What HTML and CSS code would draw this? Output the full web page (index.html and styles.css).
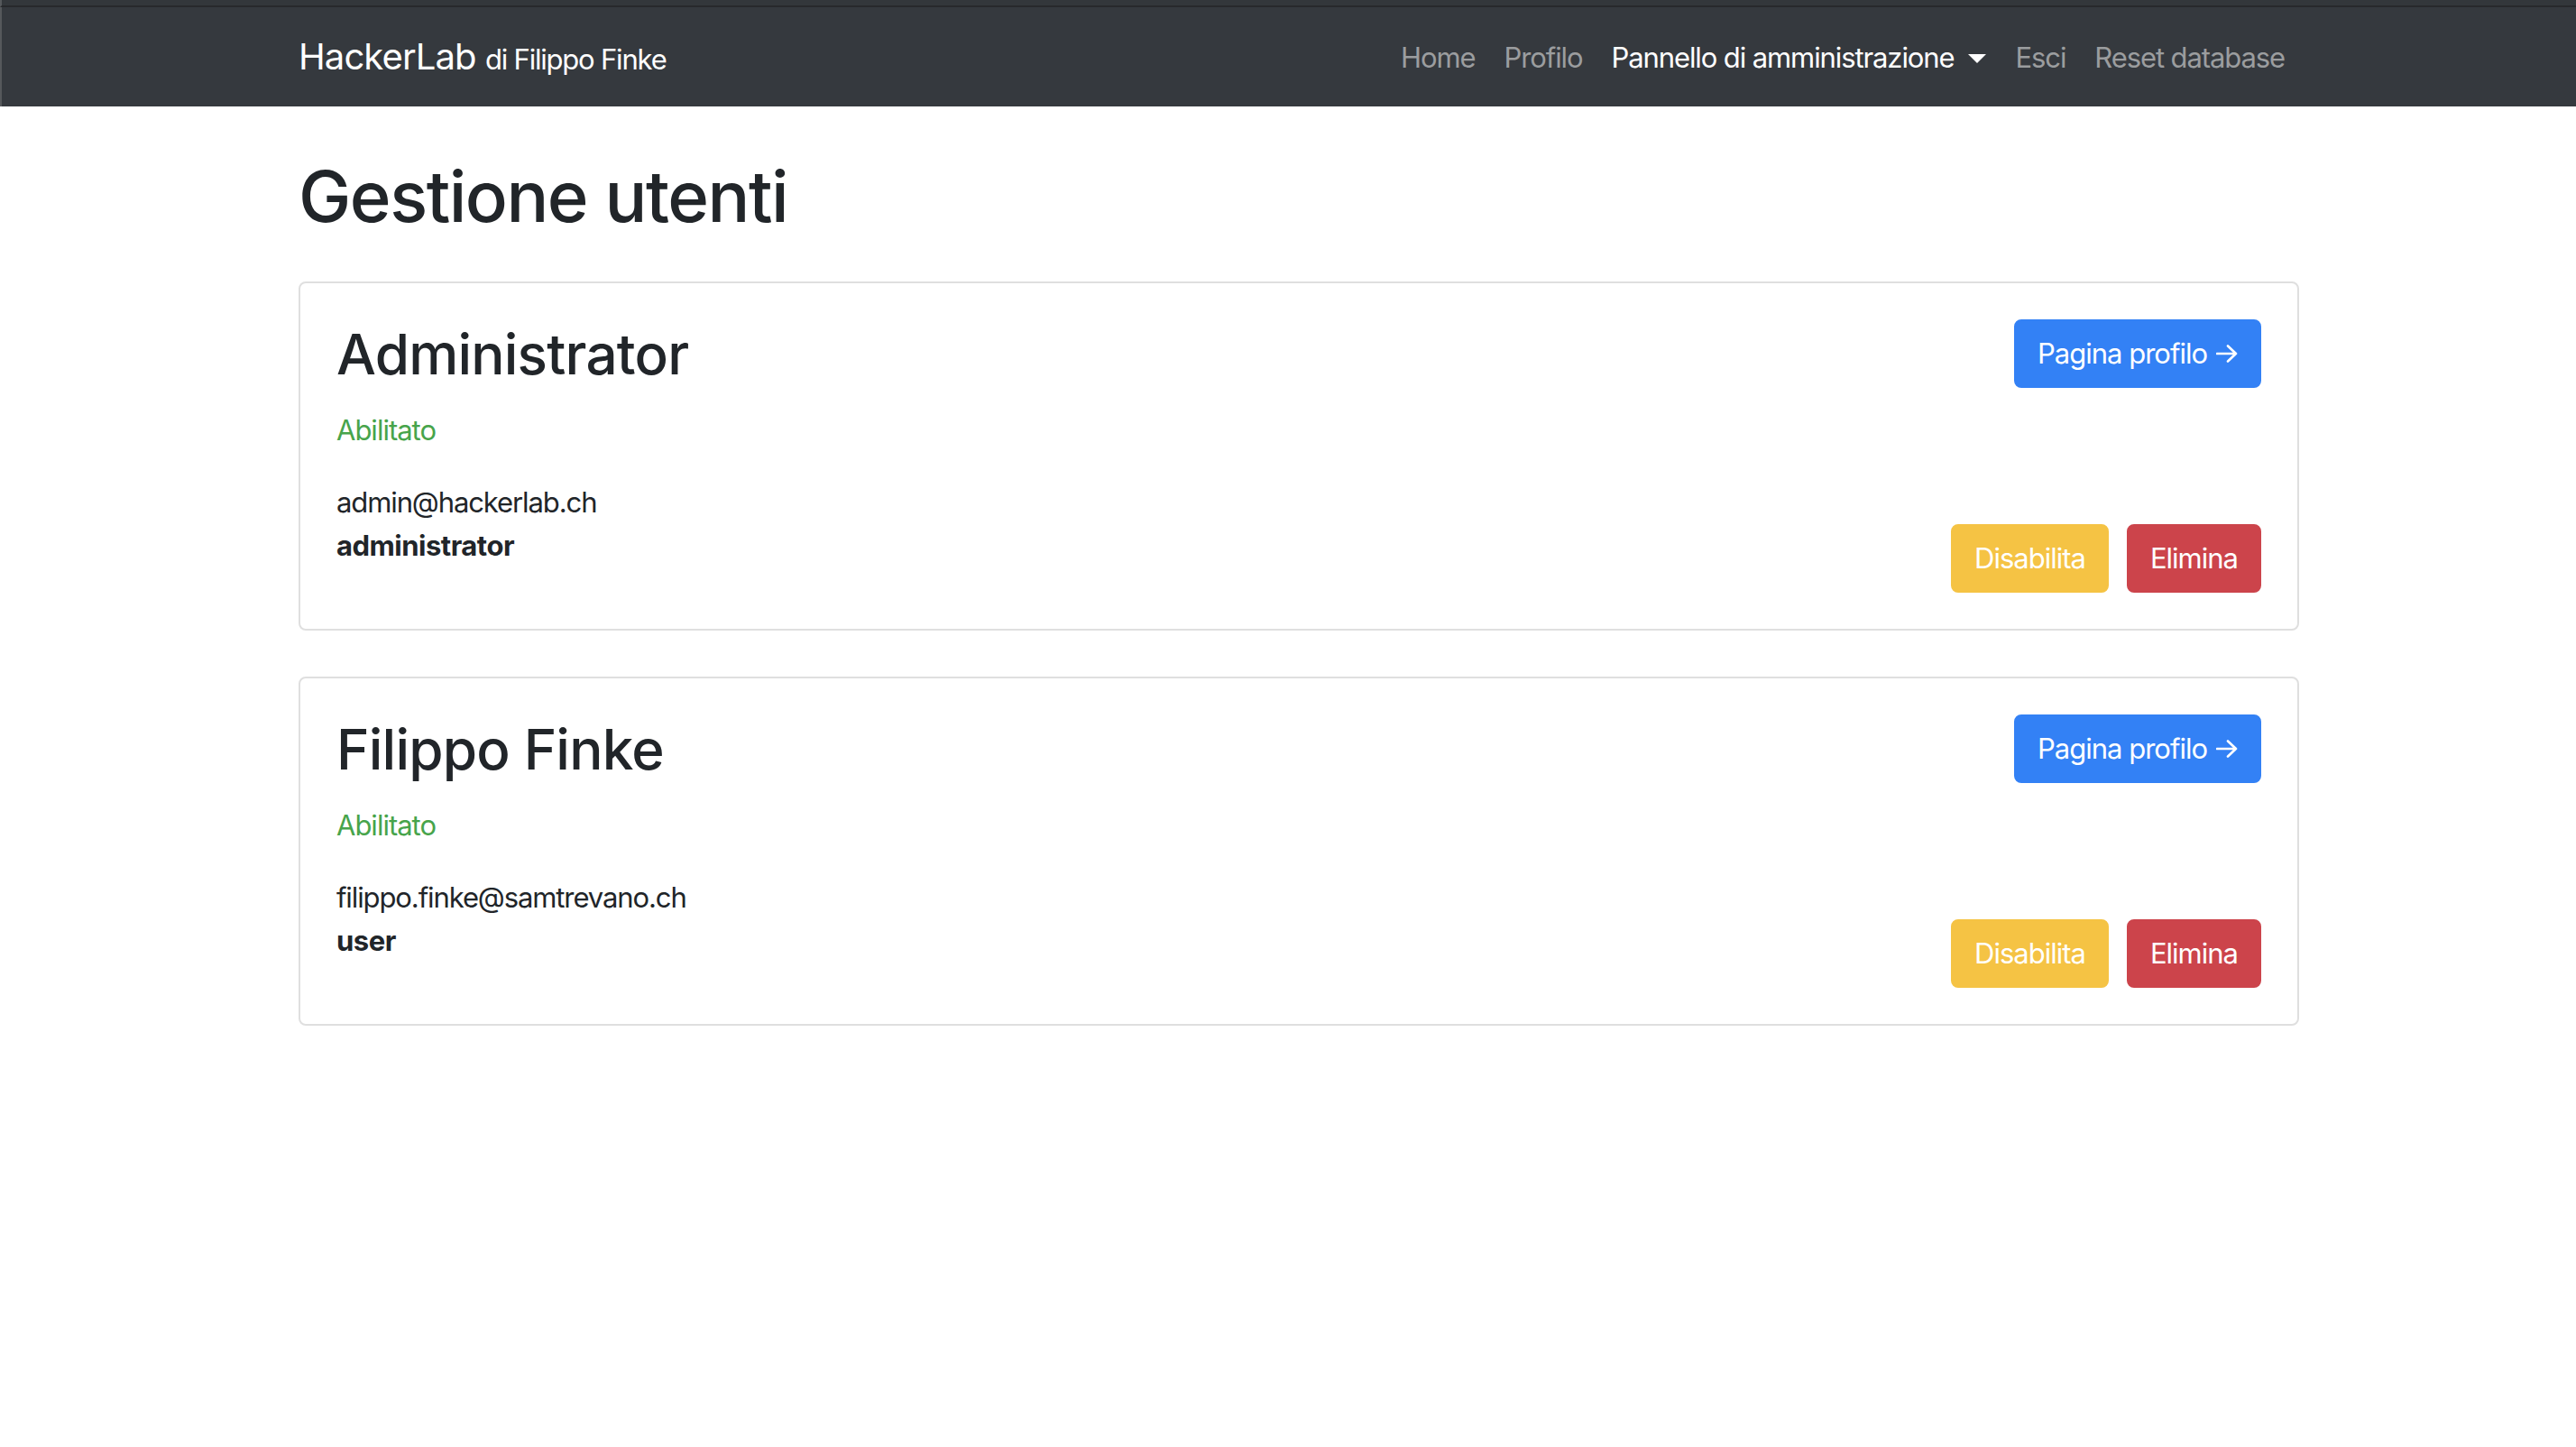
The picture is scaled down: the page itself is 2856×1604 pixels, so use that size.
FILE: index.html
```html
<!DOCTYPE html>
<html lang="it">
<head>
<meta charset="utf-8">
<title>Gestione utenti - HackerLab</title>
<link rel="stylesheet" href="styles.css">
</head>
<body>
<div class="chrome-top"></div>
<nav class="navbar">
  <div class="container nav-inner">
    <a class="brand" href="#">HackerLab <small>di Filippo Finke</small></a>
    <ul class="nav">
      <li><a class="nav-link" href="#">Home</a></li>
      <li><a class="nav-link" href="#">Profilo</a></li>
      <li><a class="nav-link active" href="#">Pannello di amministrazione<span class="caret"></span></a></li>
      <li><a class="nav-link" href="#">Esci</a></li>
      <li><a class="nav-link" href="#">Reset database</a></li>
    </ul>
  </div>
</nav>
<main class="container">
  <h1 class="page-title">Gestione utenti</h1>

  <section class="card">
    <div class="card-info">
      <h2 class="user-name">Administrator</h2>
      <p class="status">Abilitato</p>
      <p class="details">admin@hackerlab.ch<br><strong>administrator</strong></p>
    </div>
    <div class="card-actions">
      <a class="btn btn-primary" href="#">Pagina profilo <svg class="arrow" viewBox="0 0 24 20" width="24" height="20"><path d="M1 10 H22 M13 1.5 L22 10 L13 18.5" fill="none" stroke="currentColor" stroke-width="2.6" stroke-linecap="round" stroke-linejoin="round"/></svg></a>
      <div class="btn-row">
        <button class="btn btn-warning">Disabilita</button>
        <button class="btn btn-danger">Elimina</button>
      </div>
    </div>
  </section>

  <section class="card">
    <div class="card-info">
      <h2 class="user-name">Filippo Finke</h2>
      <p class="status">Abilitato</p>
      <p class="details">filippo.finke@samtrevano.ch<br><strong>user</strong></p>
    </div>
    <div class="card-actions">
      <a class="btn btn-primary" href="#">Pagina profilo <svg class="arrow" viewBox="0 0 24 20" width="24" height="20"><path d="M1 10 H22 M13 1.5 L22 10 L13 18.5" fill="none" stroke="currentColor" stroke-width="2.6" stroke-linecap="round" stroke-linejoin="round"/></svg></a>
      <div class="btn-row">
        <button class="btn btn-warning">Disabilita</button>
        <button class="btn btn-danger">Elimina</button>
      </div>
    </div>
  </section>
</main>
</body>
</html>
```
FILE: styles.css
```css
* { box-sizing: border-box; }

html, body {
  margin: 0;
  padding: 0;
  background: #ffffff;
}

body {
  font-family: "Inter", "Liberation Sans", sans-serif;
  color: #212529;
  font-size: 31px;
  line-height: 48px;
}

.container {
  width: 2218px;
  margin-left: 331px;
}

.chrome-top {
  height: 8px;
  background: #33373b;
  border-bottom: 2px solid #27292c;
  border-left: 2px solid #55585b;
}

.navbar {
  background: #35393e;
  height: 110px;
  border-left: 2px solid #55585b;
}

.nav-inner {
  height: 100%;
  display: flex;
  align-items: center;
  justify-content: space-between;
  margin-left: 329px;
  padding-top: 2px;
}

.brand {
  color: #ffffff;
  text-decoration: none;
  font-size: 40px;
  line-height: 60px;
  letter-spacing: -0.9px;
  white-space: nowrap;
}

.brand small {
  font-size: 31px;
  letter-spacing: -1.2px;
}

.nav {
  display: flex;
  list-style: none;
  margin: 0;
  padding: 0;
}

.nav-link {
  display: block;
  padding: 0 16px;
  color: #9b9d9f;
  text-decoration: none;
  font-size: 31px;
  line-height: 48px;
  letter-spacing: -1.1px;
  white-space: nowrap;
}

.nav-link.active {
  color: #ffffff;
}

.caret {
  display: inline-block;
  width: 0;
  height: 0;
  margin-left: 16px;
  vertical-align: 5px;
  border-top: 10px solid #ffffff;
  border-left: 10px solid transparent;
  border-right: 10px solid transparent;
}

.page-title {
  font-size: 78px;
  font-weight: 500;
  line-height: 96px;
  margin: 52px 0 46px;
  letter-spacing: -1.5px;
}

.card {
  display: flex;
  justify-content: space-between;
  border: 2px solid #dfdfdf;
  border-radius: 8px;
  padding: 40px;
  margin-bottom: 51px;
}

.card-info {
  display: flex;
  flex-direction: column;
}

.user-name {
  font-size: 62px;
  font-weight: 500;
  line-height: 77px;
  margin: 0 0 22px;
  letter-spacing: -0.8px;
}

.status {
  margin: 0 0 32px;
  color: #47a44b;
  letter-spacing: -1px;
}

.details {
  margin: 0 0 28px;
  letter-spacing: -1.1px;
}

.details strong {
  font-weight: 700;
  letter-spacing: -0.5px;
}

.card-actions {
  display: flex;
  flex-direction: column;
  justify-content: space-between;
  align-items: flex-end;
}

.btn-row {
  display: flex;
  gap: 20px;
}

.btn {
  display: inline-flex;
  align-items: center;
  font-family: inherit;
  font-size: 31px;
  line-height: 48px;
  padding: 12px 24px;
  border: 2px solid transparent;
  border-radius: 8px;
  color: #ffffff;
  text-decoration: none;
  letter-spacing: -1px;
  cursor: pointer;
}

.btn-primary {
  background: #3381f5;
  border-color: #3381f5;
}

.btn-warning {
  background: #f5c344;
  border-color: #f5c344;
}

.btn-danger {
  background: #cc444b;
  border-color: #cc444b;
}

.arrow {
  margin-left: 10px;
}
```
